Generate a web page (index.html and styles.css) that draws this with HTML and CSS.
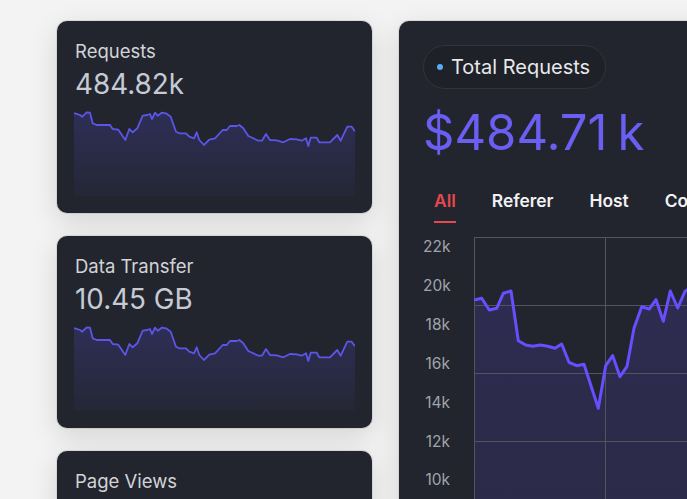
FILE: index.html
```html
<!DOCTYPE html>
<html>
<head>
<meta charset="utf-8">
<link rel="stylesheet" href="styles.css">
</head>
<body>
<div class="page">
  <div class="col">
    <div class="card">
      <div class="label">Requests</div>
      <div class="value">484.82k</div>
      <svg class="spark" width="281" height="86" viewBox="0 0 281 86">
        <defs>
          <linearGradient id="sg1" x1="0" y1="0" x2="0" y2="1">
            <stop offset="0" stop-color="#5f55ff" stop-opacity="0.2"/>
            <stop offset="1" stop-color="#5f55ff" stop-opacity="0.04"/>
          </linearGradient>
        </defs>
        <path fill="url(#sg1)" d="M0,3.3 L1,3.3 L6,5 L8.3,6.7 L12.7,2.3 L16,2.7 L18.7,13.3 L22.7,15 L36,15 L38.7,19 L44.3,19.7 L51.3,30 L55.3,19 L58.7,22.3 L63.3,18.3 L68.7,5.7 L73.3,5 L76,4 L78,9 L81,2.7 L83.7,5.7 L87.7,2.7 L92,3.3 L96.7,6.7 L102,21.7 L105.3,23.3 L112,23.3 L115.3,26.7 L120,28.3 L122.7,22.3 L125.3,30 L130,35 L135.3,29.7 L141,28.3 L148.7,20 L152.7,20 L156,16 L162.7,16 L165.3,15 L169.3,18.3 L174.3,26 L184.3,30.7 L188,30.7 L192,24 L196,30 L202.7,30.3 L209.3,32.3 L216,29 L222.7,29.3 L227.7,30.7 L232,28.3 L234.3,36 L236.7,27.7 L242.7,27.7 L245.3,32.3 L256,32.3 L259.3,29 L263.3,25 L266.7,30.7 L273.3,16.7 L277.7,16.7 L280,20 L281,21 L281,86 L0,86 Z"/>
        <path fill="none" stroke="#5b55e8" stroke-width="1.8" stroke-linejoin="round" d="M0,3.3 L1,3.3 L6,5 L8.3,6.7 L12.7,2.3 L16,2.7 L18.7,13.3 L22.7,15 L36,15 L38.7,19 L44.3,19.7 L51.3,30 L55.3,19 L58.7,22.3 L63.3,18.3 L68.7,5.7 L73.3,5 L76,4 L78,9 L81,2.7 L83.7,5.7 L87.7,2.7 L92,3.3 L96.7,6.7 L102,21.7 L105.3,23.3 L112,23.3 L115.3,26.7 L120,28.3 L122.7,22.3 L125.3,30 L130,35 L135.3,29.7 L141,28.3 L148.7,20 L152.7,20 L156,16 L162.7,16 L165.3,15 L169.3,18.3 L174.3,26 L184.3,30.7 L188,30.7 L192,24 L196,30 L202.7,30.3 L209.3,32.3 L216,29 L222.7,29.3 L227.7,30.7 L232,28.3 L234.3,36 L236.7,27.7 L242.7,27.7 L245.3,32.3 L256,32.3 L259.3,29 L263.3,25 L266.7,30.7 L273.3,16.7 L277.7,16.7 L280,20 L281,21"/>
      </svg>
    </div>
    <div class="card">
      <div class="label">Data Transfer</div>
      <div class="value">10.45 GB</div>
      <svg class="spark" width="281" height="86" viewBox="0 0 281 86">
        <defs>
          <linearGradient id="sg2" x1="0" y1="0" x2="0" y2="1">
            <stop offset="0" stop-color="#5f55ff" stop-opacity="0.2"/>
            <stop offset="1" stop-color="#5f55ff" stop-opacity="0.04"/>
          </linearGradient>
        </defs>
        <path fill="url(#sg2)" d="M0,3.3 L1,3.3 L6,5 L8.3,6.7 L12.7,2.3 L16,2.7 L18.7,13.3 L22.7,15 L36,15 L38.7,19 L44.3,19.7 L51.3,30 L55.3,19 L58.7,22.3 L63.3,18.3 L68.7,5.7 L73.3,5 L76,4 L78,9 L81,2.7 L83.7,5.7 L87.7,2.7 L92,3.3 L96.7,6.7 L102,21.7 L105.3,23.3 L112,23.3 L115.3,26.7 L120,28.3 L122.7,22.3 L125.3,30 L130,35 L135.3,29.7 L141,28.3 L148.7,20 L152.7,20 L156,16 L162.7,16 L165.3,15 L169.3,18.3 L174.3,26 L184.3,30.7 L188,30.7 L192,24 L196,30 L202.7,30.3 L209.3,32.3 L216,29 L222.7,29.3 L227.7,30.7 L232,28.3 L234.3,36 L236.7,27.7 L242.7,27.7 L245.3,32.3 L256,32.3 L259.3,29 L263.3,25 L266.7,30.7 L273.3,16.7 L277.7,16.7 L280,20 L281,21 L281,86 L0,86 Z"/>
        <path fill="none" stroke="#5b55e8" stroke-width="1.8" stroke-linejoin="round" d="M0,3.3 L1,3.3 L6,5 L8.3,6.7 L12.7,2.3 L16,2.7 L18.7,13.3 L22.7,15 L36,15 L38.7,19 L44.3,19.7 L51.3,30 L55.3,19 L58.7,22.3 L63.3,18.3 L68.7,5.7 L73.3,5 L76,4 L78,9 L81,2.7 L83.7,5.7 L87.7,2.7 L92,3.3 L96.7,6.7 L102,21.7 L105.3,23.3 L112,23.3 L115.3,26.7 L120,28.3 L122.7,22.3 L125.3,30 L130,35 L135.3,29.7 L141,28.3 L148.7,20 L152.7,20 L156,16 L162.7,16 L165.3,15 L169.3,18.3 L174.3,26 L184.3,30.7 L188,30.7 L192,24 L196,30 L202.7,30.3 L209.3,32.3 L216,29 L222.7,29.3 L227.7,30.7 L232,28.3 L234.3,36 L236.7,27.7 L242.7,27.7 L245.3,32.3 L256,32.3 L259.3,29 L263.3,25 L266.7,30.7 L273.3,16.7 L277.7,16.7 L280,20 L281,21"/>
      </svg>
    </div>
    <div class="card">
      <div class="label">Page Views</div>
    </div>
  </div>

  <div class="panel">
    <div class="pill"><span class="dot"></span><span class="pill-text">Total Requests</span></div>
    <div class="big">$484.71<span class="unit">k</span></div>
    <div class="tabs">
      <div class="tab active">All</div>
      <div class="tab">Referer</div>
      <div class="tab">Host</div>
      <div class="tab">Country</div>
    </div>
    <div class="chart">
      <div class="axis">
        <div>22k</div><div>20k</div><div>18k</div><div>16k</div><div>14k</div><div>12k</div><div>10k</div>
      </div>
      <svg class="plot" width="300" height="300" viewBox="0 0 300 300">
        <defs>
          <linearGradient id="mg" x1="0" y1="0" x2="0" y2="1">
            <stop offset="0" stop-color="#6a4dff" stop-opacity="0.17"/>
            <stop offset="1" stop-color="#6a4dff" stop-opacity="0.12"/>
          </linearGradient>
        </defs>
        <path fill="url(#mg)" d="M0,63 L7.7,61.3 L15.3,73 L22.7,71.3 L29.3,56.3 L37,54 L44.3,103.7 L51.7,108 L58.7,109.3 L66.3,108 L73.7,109.3 L81,111.3 L87.7,107 L95,125.3 L102.7,128.7 L110,127.3 L124.3,171.3 L131.7,128.7 L138.7,118.7 L146,139.7 L153,129.3 L160,91.3 L167.7,69.7 L175.3,72 L182,62.7 L189.3,84.3 L196.3,54 L203.7,71 L211,54.3 L218,50 L226,62 L234,58 L234,300 L0,300 Z"/>
        <g stroke="#52555e" stroke-width="1">
          <line x1="0.5" y1="0" x2="0.5" y2="300"/>
          <line x1="131.5" y1="0" x2="131.5" y2="300"/>
          <line x1="0" y1="0.5" x2="300" y2="0.5"/>
          <line x1="0" y1="68.5" x2="300" y2="68.5"/>
          <line x1="0" y1="136.5" x2="300" y2="136.5"/>
          <line x1="0" y1="204.5" x2="300" y2="204.5"/>
        </g>
        <path fill="none" stroke="#6a4dff" stroke-width="3" stroke-linejoin="round" d="M0,63 L7.7,61.3 L15.3,73 L22.7,71.3 L29.3,56.3 L37,54 L44.3,103.7 L51.7,108 L58.7,109.3 L66.3,108 L73.7,109.3 L81,111.3 L87.7,107 L95,125.3 L102.7,128.7 L110,127.3 L124.3,171.3 L131.7,128.7 L138.7,118.7 L146,139.7 L153,129.3 L160,91.3 L167.7,69.7 L175.3,72 L182,62.7 L189.3,84.3 L196.3,54 L203.7,71 L211,54.3 L218,50 L226,62 L234,58"/>
      </svg>
    </div>
  </div>
</div>
</body>
</html>
```

FILE: styles.css
```css
* { box-sizing: border-box; }
html, body {
  margin: 0;
  padding: 0;
  overflow: hidden;
  height: 100%;
}
body {
  background: #f3f3f3;
  font-family: Inter, "Noto Sans", sans-serif;
}
.page {
  display: flex;
  gap: 27px;
  padding: 21px 0 0 57px;
  width: 1000px;
}
.col {
  display: flex;
  flex-direction: column;
  gap: 23px;
  width: 315px;
  flex: none;
}
.card {
  height: 192px;
  background: #22252d;
  border-radius: 10px;
  padding: 20px 17px 0 17px;
  box-shadow: 0 8px 28px rgba(0, 0, 0, 0.13), 0 0 0 1px rgba(0, 0, 0, 0.08);
}
.label {
  font-size: 18.5px;
  line-height: 20px;
  color: #d2d4d8;
  padding-left: 1px;
}
.value {
  margin-top: 7px;
  font-size: 27.8px;
  line-height: 32px;
  color: #c6cad4;
  padding-left: 1px;
}
.spark {
  display: block;
  margin-top: 10px;
}
.panel {
  flex: none;
  width: 330px;
  height: 520px;
  background: #22252d;
  border-radius: 10px;
  padding: 24px 0 0 24px;
  box-shadow: 0 8px 28px rgba(0, 0, 0, 0.13), 0 0 0 1px rgba(0, 0, 0, 0.08);
}
.pill {
  display: inline-flex;
  align-items: center;
  height: 44px;
  padding: 0 15px 0 13px;
  border: 1px solid #30343d;
  border-radius: 22px;
  background: #1e2128;
}
.dot {
  width: 6px;
  height: 6px;
  border-radius: 50%;
  background: #5aaaf5;
  margin-right: 8px;
}
.pill-text {
  font-size: 20px;
  color: #e8e8ea;
}
.big {
  margin-top: 19px;
  font-size: 49px;
  line-height: 50px;
  color: #6a5ff2;
  white-space: nowrap;
}
.unit {
  margin-left: 10px;
}
.tabs {
  display: flex;
  gap: 36px;
  margin: 33px 0 0 11px;
  white-space: nowrap;
}
.tab {
  font-size: 17.4px;
  line-height: 20px;
  font-weight: 600;
  color: #f2f2f4;
  padding-bottom: 10px;
  border-bottom: 2px solid transparent;
}
.tab.active {
  color: #e5484d;
  border-bottom-color: #e5484d;
}
.chart {
  display: flex;
  margin-top: 5px;
}
.axis {
  width: 27px;
  font-size: 15.5px;
  line-height: 38.9px;
  color: #a0a3aa;
  text-align: right;
  flex: none;
}
.plot {
  display: block;
  margin: 9px 0 0 24px;
  flex: none;
}
```
